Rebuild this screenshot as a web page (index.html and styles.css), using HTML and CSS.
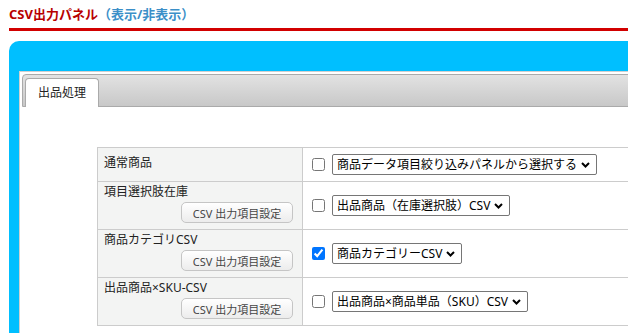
FILE: index.html
```html
<!DOCTYPE html>
<html lang="ja">
<head>
    <meta charset="UTF-8">
    <title>CSV出力パネル</title>
    <link rel="stylesheet" href="styles.css">
</head>
<body>

<div class="panel-title">
    <span class="title-main">CSV出力パネル</span><a class="title-toggle" href="#">（表示/非表示）</a>
</div>

<div class="csv-panel">
    <div class="tabs">
        <ul class="tab-nav">
            <li class="tab active">出品処理</li>
        </ul>
        <div class="tab-body">
            <table class="csv-table">
                <tr>
                    <th>通常商品</th>
                    <td>
                        <div class="opt">
                            <input type="checkbox">
                            <select><option>商品データ項目絞り込みパネルから選択する</option></select>
                        </div>
                    </td>
                </tr>
                <tr>
                    <th>項目選択肢在庫<button class="btn-setting">CSV 出力項目設定</button></th>
                    <td>
                        <div class="opt">
                            <input type="checkbox">
                            <select><option>出品商品（在庫選択肢）CSV</option></select>
                        </div>
                    </td>
                </tr>
                <tr>
                    <th>商品カテゴリCSV<button class="btn-setting">CSV 出力項目設定</button></th>
                    <td>
                        <div class="opt">
                            <input type="checkbox" checked>
                            <select><option>商品カテゴリーCSV</option></select>
                        </div>
                    </td>
                </tr>
                <tr>
                    <th>出品商品×SKU-CSV<button class="btn-setting">CSV 出力項目設定</button></th>
                    <td>
                        <div class="opt">
                            <input type="checkbox">
                            <select><option>出品商品×商品単品（SKU）CSV</option></select>
                        </div>
                    </td>
                </tr>
            </table>
        </div>
    </div>
</div>

</body>
</html>
```

FILE: styles.css
```css
/* === CSV panel === */
html, body {
  overflow: hidden;
}

body {
  margin: 0;
  background: #fff;
  color: #222;
  font-family: "Noto Sans", "Noto Sans CJK JP", sans-serif;
  font-size: 12px;
}

.panel-title {
  margin-left: 9px;
  padding: 5px 0;
  line-height: 18px;
  font-size: 13px;
  font-weight: bold;
  border-bottom: 3px solid #d20000;
}

.title-main {
  color: #b80000;
}

.title-toggle {
  color: #3b8fc8;
  text-decoration: none;
}

/* blue frame runs past the right edge, like the original page */
.csv-panel {
  width: 900px;
  margin: 10px 0 0 9px;
  padding: 30px 0 0 10px;
  background: #00bfff;
  border-top-left-radius: 10px;
}

.tabs {
  background: #fff;
  border: 1px solid #d0d0d0;
  padding: 2px;
}

.tab-nav {
  display: flex;
  align-items: flex-end;
  height: 28px;
  margin: 0;
  padding: 3px 0 0 2px;
  list-style: none;
  border: 1px solid #aaa;
  border-radius: 4px 0 0 0;
  background: linear-gradient(#e2e2e2, #c8c8c8);
}

.tab {
  height: 28px;
  line-height: 28px;
  padding: 0 12px;
  margin-bottom: -1px;
  border: 1px solid #aaa;
  border-bottom: none;
  border-radius: 4px 4px 0 0;
  background: #fff;
  color: #212121;
  font-size: 12px;
}

.tab-body {
  padding: 40px 0 30px 75px;
}

.csv-table {
  width: 640px;
  border-collapse: collapse;
  border: 1px solid #ccc;
}

.csv-table th,
.csv-table td {
  border: 1px solid #ccc;
  vertical-align: middle;
}

.csv-table th {
  width: 189px;
  padding: 2px 9px 6px 6px;
  background: #f3f4f3;
  text-align: left;
  font-weight: normal;
  line-height: 16px;
}

.csv-table td {
  padding: 6px 9px;
}

.btn-setting {
  display: block;
  width: 112px;
  height: 21px;
  margin: 2px 0 0 auto;
  padding: 0;
  border: 1px solid #c5c5c5;
  border-radius: 5px;
  background: linear-gradient(#ffffff, #ececec);
  color: #454545;
  font-family: inherit;
  font-size: 11px;
}

.opt {
  display: flex;
  align-items: center;
  gap: 7px;
}

.opt input {
  width: 13px;
  height: 13px;
  margin: 0;
}

.opt select {
  -webkit-appearance: none;
  appearance: none;
  height: 21px;
  padding: 0 18px 0 4px;
  border: 1px solid #767676;
  border-radius: 2px;
  background: #fff url("data:image/svg+xml,%3Csvg xmlns='http://www.w3.org/2000/svg' width='9' height='6' viewBox='0 0 9 6'%3E%3Cpath d='M1 1l3.5 3.5L8 1' fill='none' stroke='%23000' stroke-width='2'/%3E%3C/svg%3E") no-repeat right 6px center;
  color: #000;
  font-family: inherit;
  font-size: 12px;
}
```
